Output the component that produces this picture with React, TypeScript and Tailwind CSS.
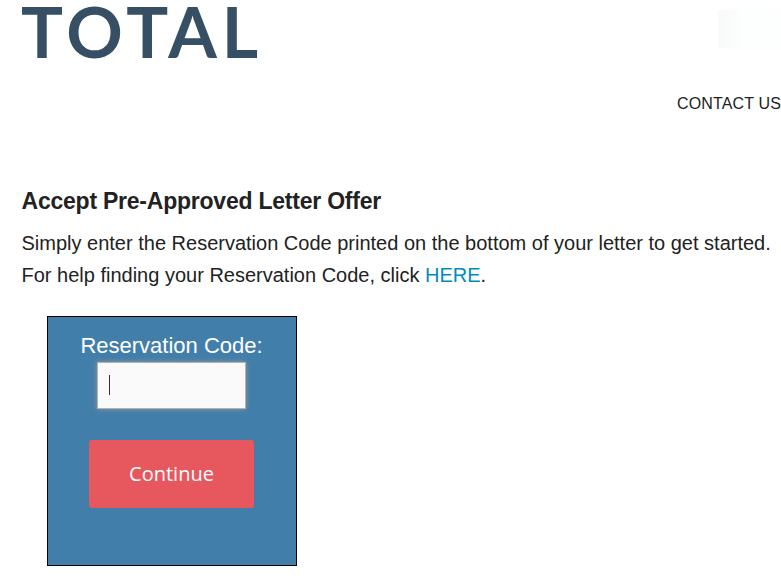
import React from 'react';

const Header: React.FC = () => (
  <header className="flex h-[112px] items-start justify-between">
    <div className="pl-[21px] font-['Lato',sans-serif] text-[70px] font-bold leading-[62px] tracking-[5px] text-[#364f65]">
      TOTAL
    </div>
    <div className="flex flex-col items-end">
      <div className="mt-[10px] h-[38px] w-[63px] bg-gradient-to-r from-[#f8fafa] to-[#fdfefe] to-40% shadow-[5px_0_8px_#fbfcfc]" />
      <a href="#contact" className="mt-[46px] whitespace-nowrap text-[16px] leading-[20px] tracking-[0.15px] text-[#222]">
        CONTACT US
      </a>
    </div>
  </header>
);

const ReservationForm: React.FC = () => (
  <form className="ml-[47px] mt-[25px] flex h-[250px] w-[250px] flex-col items-center border border-black bg-[#427eaa] pr-[2px]">
    <label htmlFor="code" className="mt-[13px] pl-px text-[22px] leading-[32px] text-white">
      Reservation Code:
    </label>
    <div className="flex h-[47px] w-[149px] items-center border border-[#b3b3b3] bg-[#fafafa] pb-[2px] pl-[11px] shadow-[0_0_5px_#999]">
      <div className="h-[20px] w-px bg-[#333]" />
    </div>
    <button type="button" className="mt-[31px] h-[68px] w-[165px] rounded-[3px] bg-[#e7575e] pl-px font-['Open_Sans',sans-serif] text-[20px] text-white">
      Continue
    </button>
  </form>
);

const App: React.FC = () => (
  <div className="h-[583px] w-[781px] overflow-hidden bg-white font-['Liberation_Sans',sans-serif] text-[#222]">
    <Header />
    <main className="pt-[73px]">
      <h1 className="ml-[21.5px] text-[23px] font-bold leading-[32px] tracking-[-0.23px]">Accept Pre-Approved Letter Offer</h1>
      <p className="ml-[21.5px] mt-[10px] whitespace-nowrap text-[20px] leading-[32px]">
        Simply enter the Reservation Code printed on the bottom of your letter to get started.
        <br />
        For help finding your Reservation Code, click <a href="#help" className="text-[#008cba]">HERE</a>.
      </p>
      <ReservationForm />
    </main>
  </div>
);

export default App;
